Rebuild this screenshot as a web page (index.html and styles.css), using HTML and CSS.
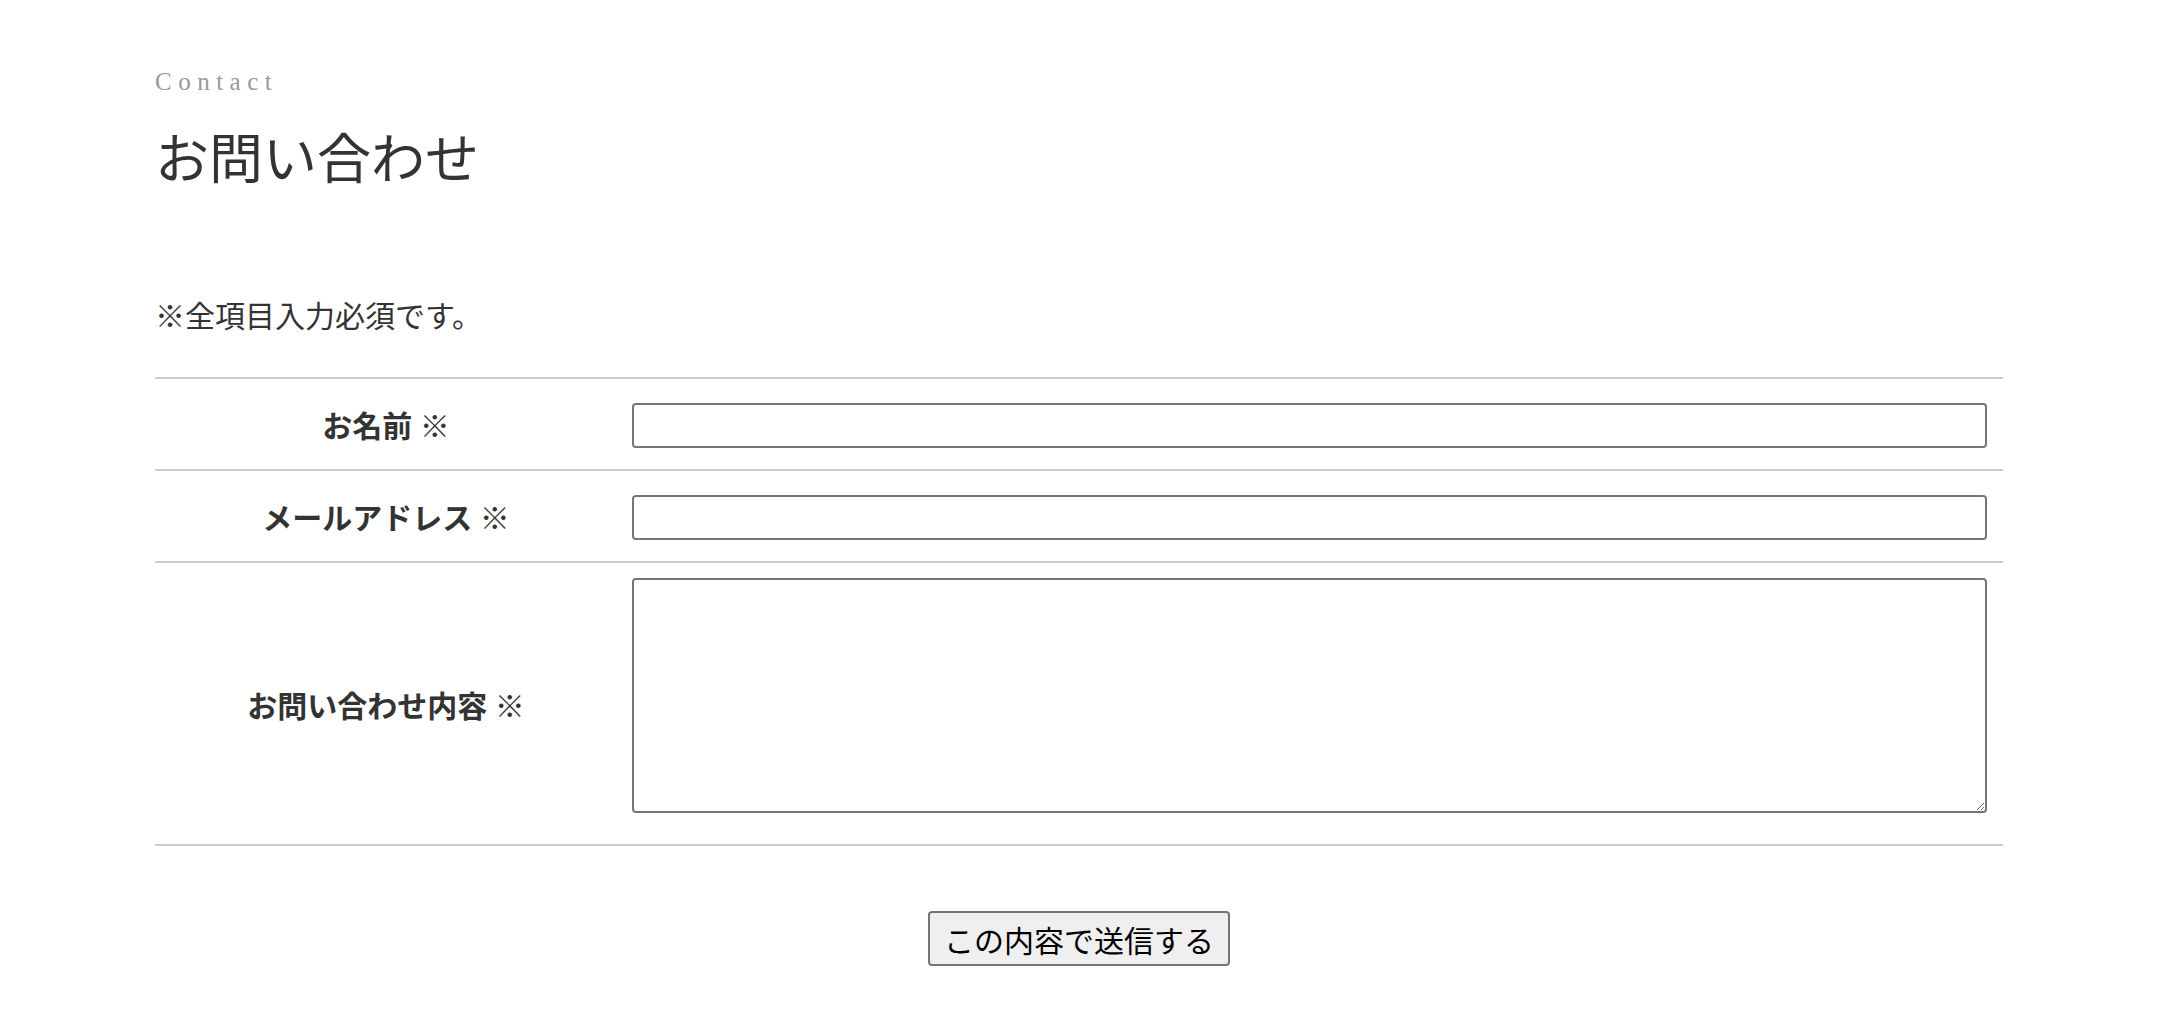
FILE: index.html
```html
<!DOCTYPE html>
<html lang="ja">
<head>
    <meta charset="UTF-8">
    <title>お問い合わせ</title>
    <link rel="stylesheet" href="styles.css">
</head>
<body>

<section class="contact">
    <p class="contact-en">Contact</p>
    <h1 class="contact-title">お問い合わせ</h1>

    <p class="contact-note">※全項目入力必須です。</p>

    <form class="contact-form" action="#" method="post">
        <table class="form-table">
            <tr>
                <th><label for="name">お名前 ※</label></th>
                <td><input type="text" id="name" name="name" class="form-input"></td>
            </tr>
            <tr>
                <th><label for="email">メールアドレス ※</label></th>
                <td><input type="email" id="email" name="email" class="form-input"></td>
            </tr>
            <tr class="row-message">
                <th><label for="message">お問い合わせ内容 ※</label></th>
                <td><textarea id="message" name="message" class="form-textarea"></textarea></td>
            </tr>
        </table>

        <div class="form-submit">
            <button type="submit" class="submit-btn">この内容で送信する</button>
        </div>
    </form>
</section>

</body>
</html>
```

FILE: styles.css
```css
body {
    margin: 0;
    background: #fff;
    color: #333;
    font-family: "Liberation Serif", "Noto Sans CJK JP", serif;
}
.contact {
    padding: 0 169px 0 155px;
}
.contact-en {
    margin: 64px 0 0;
    font-size: 25px;
    line-height: 36px;
    letter-spacing: 0.26em;
    color: #999;
}
.contact-title {
    margin: 22px 0 0;
    font-size: 54px;
    line-height: 78px;
    font-weight: normal;
    color: #333;
}
.contact-note {
    margin: 96px 0 0;
    font-size: 30px;
    line-height: 42px;
}
.form-table {
    width: 100%;
    margin-top: 39px;
    border-collapse: collapse;
    border-top: 2px solid #ccc;
}
.form-table tr {
    border-bottom: 2px solid #ccc;
}
.form-table th {
    width: 25%;
    padding: 0;
    text-align: center;
    vertical-align: middle;
    font-size: 30px;
    font-weight: bold;
    color: #333;
}
.form-table td {
    padding: 24px 16px 21px 15px;
    vertical-align: middle;
}
.row-message td {
    padding-top: 15px;
    padding-bottom: 31px;
}
.form-input,
.form-textarea {
    display: block;
    box-sizing: border-box;
    width: 100%;
    border: 2px solid #767676;
    border-radius: 4px;
    background: #fff;
    margin: 0;
}
.form-input {
    height: 45px;
}
.form-textarea {
    height: 235px;
}
.form-submit {
    margin-top: 65px;
    text-align: center;
}
.submit-btn {
    box-sizing: border-box;
    width: 302px;
    height: 55px;
    padding: 0 12px;
    font-family: "Noto Sans CJK JP", sans-serif;
    font-size: 30px;
    color: #000;
    background: #efefef;
    border: 2px solid #767676;
    border-radius: 4px;
    cursor: pointer;
}
```
